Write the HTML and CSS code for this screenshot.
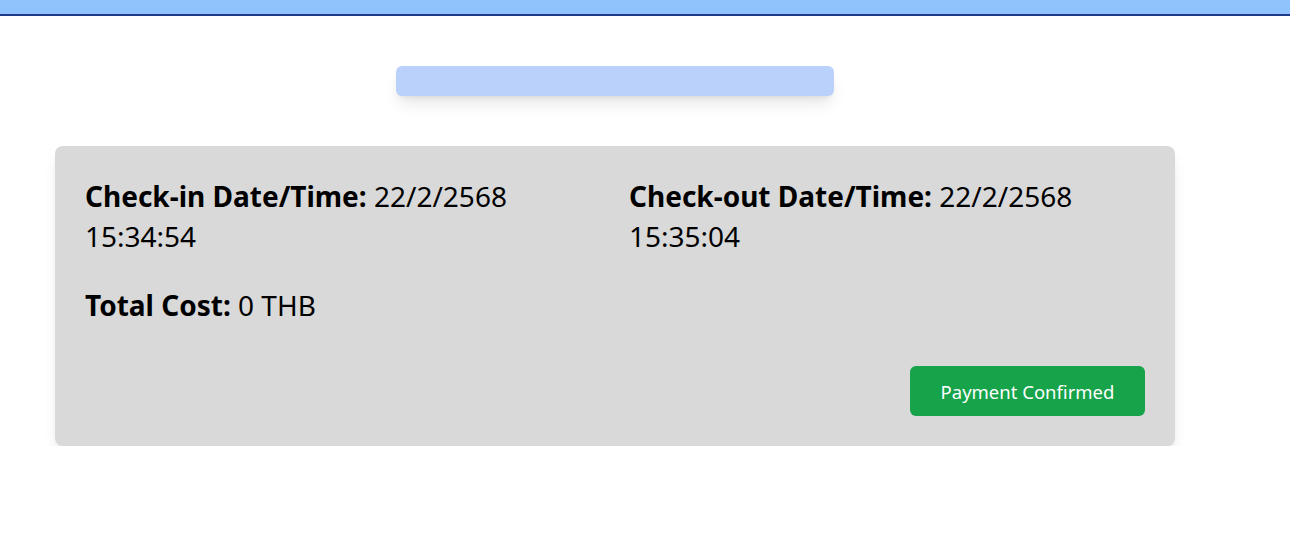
FILE: index.html
```html
<!DOCTYPE html>
<html lang="en">
<head>
<meta charset="utf-8">
<title>Booking</title>
<link rel="stylesheet" href="styles.css">
</head>
<body>
<header class="topbar"></header>
<main class="page">
  <div class="title-bar"></div>
  <section class="card">
    <div class="details">
      <p class="field"><strong>Check-in Date/Time:</strong> 22/2/2568 15:34:54</p>
      <p class="field"><strong>Check-out Date/Time:</strong> 22/2/2568 15:35:04</p>
      <p class="field"><strong>Total Cost:</strong> 0 THB</p>
    </div>
    <div class="actions">
      <button class="btn-confirmed" type="button">Payment Confirmed</button>
    </div>
  </section>
</main>
</body>
</html>
```
FILE: styles.css
```css
* { box-sizing: border-box; }
html, body {
  margin: 0;
  padding: 0;
  background: #ffffff;
  font-family: "Segoe UI", "Noto Sans", "Open Sans", sans-serif;
  color: #000;
}
.topbar {
  height: 16px;
  background: #90c2fc;
  border-bottom: 2px solid #1e3a8a;
}
.page {
  display: flex;
  flex-direction: column;
  align-items: center;
  padding: 50px 115px 0 55px;
}
.title-bar {
  width: 438px;
  height: 30px;
  background: #bad1fb;
  border-radius: 6px;
  box-shadow: 0 10px 15px -3px rgba(0,0,0,0.1), 0 4px 6px -4px rgba(0,0,0,0.1);
}
.card {
  margin-top: 50px;
  width: 1120px;
  background: #d9d9d9;
  border-radius: 8px;
  padding: 30px;
  box-shadow: 0 10px 15px -3px rgba(0,0,0,0.1), 0 4px 6px -4px rgba(0,0,0,0.1);
}
.details {
  display: grid;
  grid-template-columns: 1fr 1fr;
  gap: 29px 28px;
}
.field {
  margin: 0;
  font-size: 28px;
  line-height: 40px;
}
.field strong { font-weight: 700; }
.actions {
  display: flex;
  justify-content: flex-end;
  margin-top: 41px;
}
.btn-confirmed {
  width: 235px;
  height: 50px;
  border: none;
  border-radius: 6px;
  background: #16a34a;
  color: #ffffff;
  font-family: inherit;
  font-size: 18.5px;
  cursor: pointer;
}
```
